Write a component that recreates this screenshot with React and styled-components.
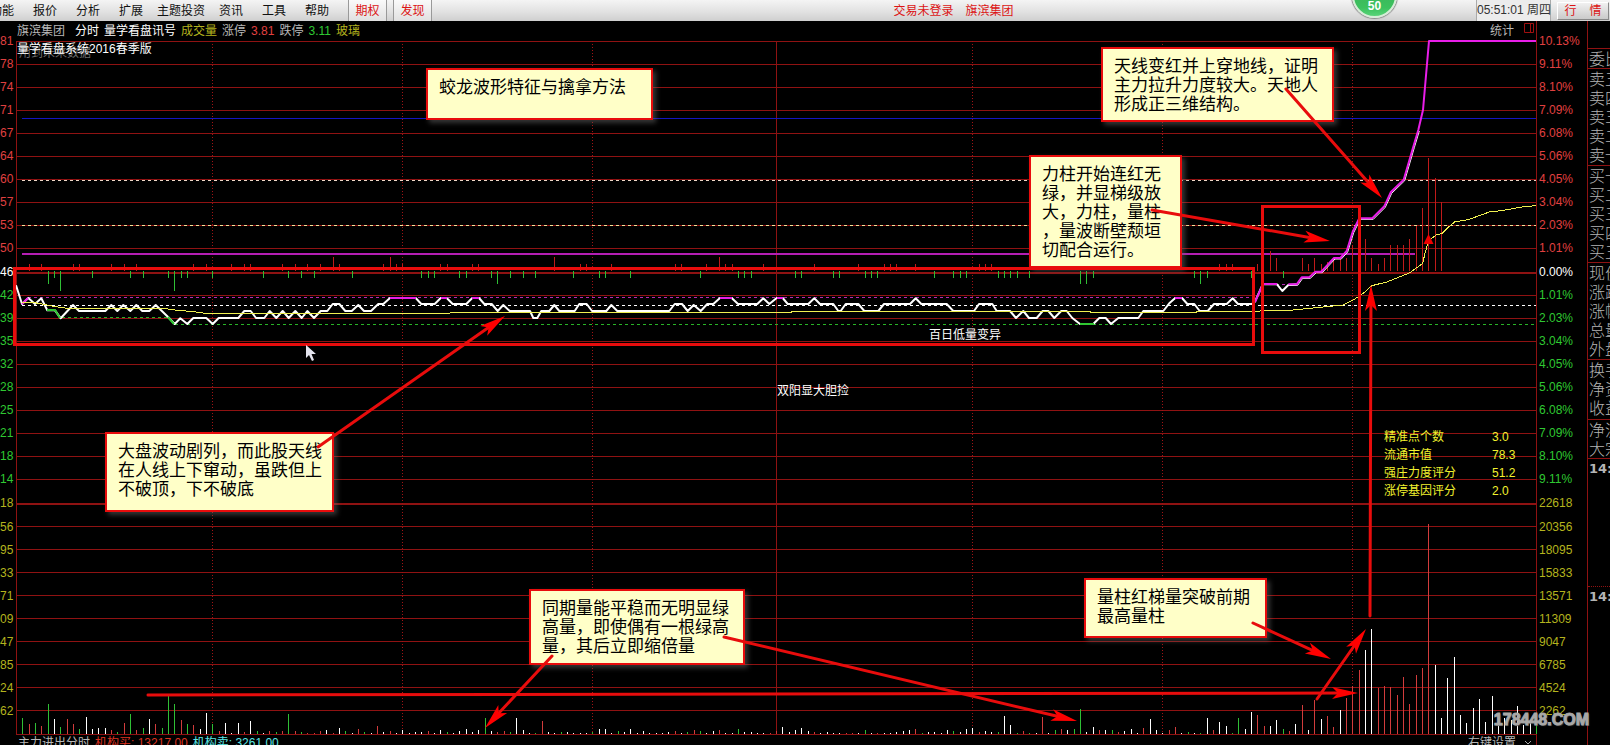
import React from "react";
import styled, { createGlobalStyle, css } from "styled-components";

const CJK = `"Liberation Sans", "Noto Sans CJK SC", sans-serif`;

const C = {
  red: "#e04040",
  green: "#2fc832",
  olive: "#b4b41e",
  yellow: "#f2f22e",
  white: "#ffffff",
  grey: "#b8b8b8",
  grid: "#8f1212",
  mark: "#e80c0c",
  magenta: "#e81ee8",
};

const Global = createGlobalStyle`
  *, *::before, *::after { box-sizing: border-box; }
  body { margin: 0; background: #000; font: 12px/16px ${CJK}; }
  ul, ol, p, h1 { margin: 0; padding: 0; list-style: none; font-size: inherit; font-weight: inherit; }
  button { font: inherit; margin: 0; padding: 0; border: 0; background: none; cursor: pointer; }
`;

const Page = styled.div`
  display: flex;
  flex-direction: column;
  min-width: 1200px;
  height: 100vh;
  overflow: hidden;
  background: #000;
  color: ${C.white};
`;

/* ---------- menu bar ---------- */

const MenuBar = styled.header`
  position: relative;
  display: flex;
  flex: none;
  height: 21px;
  overflow: hidden;
  background: linear-gradient(#f4f4f4, #e2e2e2 55%, #cfcfcf);
  color: #111;
`;

const Menu = styled.nav`
  display: flex;
  flex: 3;
  align-items: stretch;
  gap: 19px;
  margin: 0 10px 0 -10px;
`;

const MenuItem = styled.button`
  margin: 0 ${(p) => (p.$wide ? -5 : 0)}px;
  white-space: nowrap;
  color: #111;
`;

const TabGroup = styled.div`
  display: flex;
  gap: 6px;
`;

const TabButton = styled.button`
  width: 39px;
  border-left: 1px solid #999;
  border-right: 1px solid #999;
  background: linear-gradient(#fafafa, #e0e0e0);
  color: #dc1414;
`;

const Account = styled.div`
  display: flex;
  align-items: center;
  gap: 12px;
  color: #dc1414;
  white-space: nowrap;
`;

const StatusArea = styled.div`
  display: flex;
  flex: 2;
  justify-content: flex-end;
  align-items: stretch;
  gap: 6px;
  padding-right: 1px;
`;

const Clock = styled.time`
  width: 75px;
  border: 1px solid #aaa;
  border-width: 0 1px;
  background: #ececec;
  color: #333;
  line-height: 20px;
  text-align: center;
  white-space: nowrap;
`;

const QuoteButton = styled.button`
  display: flex;
  width: 52px;
  height: 18px;
  margin-top: 2px;
  align-items: center;
  justify-content: space-around;
  border: 1px solid #888;
  border-color: #fff #888 #888 #fff;
  background: linear-gradient(#f0f0f0, #cacaca);
  color: #dc1414;
`;

const Badge = styled.span`
  position: absolute;
  right: 213px;
  bottom: 3px;
  display: flex;
  width: 45px;
  height: 45px;
  align-items: flex-end;
  justify-content: center;
  padding-bottom: 2px;
  border: 2px solid #d8ecd8;
  border-radius: 50%;
  box-shadow: 0 0 1px 1px #8a8a8a;
  background: linear-gradient(#3aa856, #3cc25e 80%, #58d478);
  color: #fff;
  font-weight: 700;
`;

/* ---------- main layout ---------- */

const Body = styled.main`
  display: grid;
  flex: 1;
  grid-template-columns: 16px minmax(0, 1fr) 51px 23px;
  min-height: 0;
  overflow: hidden;
`;

const Axis = styled.ol`
  padding-top: 9px;
  ${(p) =>
    p.$side === "left"
      ? css`
          padding-right: 3px;
          text-align: right;
        `
      : css`
          padding-left: 2px;
          border-left: 1px solid ${C.grid};
        `}
`;

const AxisLabel = styled.li`
  height: ${(p) => p.$height || 23}px;
  color: ${(p) => p.$color};
  line-height: ${(p) => p.$height || 23}px;
`;

const ChartColumn = styled.section`
  display: flex;
  flex-direction: column;
  min-width: 0;
`;

const InfoBar = styled.div`
  display: flex;
  height: 20px;
  align-items: center;
  gap: 5px;
  padding-left: 1px;
  white-space: nowrap;
`;

const Info = styled.span`
  color: ${(p) => p.$color};
  margin-right: ${(p) => (p.$wide ? 5 : 0)}px;
`;

const InfoTools = styled.div`
  display: flex;
  margin-left: auto;
  align-items: flex-start;
  gap: 10px;
  padding-right: 2px;
`;

const PlainButton = styled.button`
  color: ${(p) => p.$color || C.grey};
`;

const Plot = styled.div`
  position: relative;
  flex: none;
`;

const Canvas = styled.svg`
  display: block;
  width: 100%;
  height: 693px;
  overflow: visible;
`;

const MarkLayer = styled(Canvas)`
  position: absolute;
  inset: 0;
  pointer-events: none;
`;

const Title = styled.h1`
  position: absolute;
  top: 0;
  left: 1px;
  white-space: nowrap;
`;

const Faint = styled.p`
  position: absolute;
  top: 4px;
  left: 3px;
  color: #6a6a6a;
  white-space: nowrap;
`;

const at = css`
  position: absolute;
  left: ${(p) => `calc(100% * ${p.$x} / 1520)`};
  top: ${(p) => p.$y}px;
`;

const PlotLabel = styled.span`
  ${at}
  white-space: nowrap;
`;

const Note = styled.aside`
  ${at}
  width: ${(p) => p.$w}px;
  height: ${(p) => p.$h}px;
  padding: 6px 0 0 11px;
  border: 2px solid ${C.mark};
  background: #ffffc8;
  box-shadow: 3px 3px 5px rgba(110, 110, 110, 0.5);
  color: #000;
  font: 17px/19px "Noto Sans CJK SC", sans-serif;
  white-space: nowrap;
`;

const Stats = styled.table`
  ${at}
  border-collapse: collapse;
  color: ${C.yellow};
  th, td {
    height: 18px;
    padding: 0;
    font-weight: 400;
    text-align: left;
    white-space: nowrap;
  }
  th { width: 108px; }
`;

const Footer = styled.footer`
  display: flex;
  gap: 5px;
  padding: 1px 4px 0 2px;
  white-space: nowrap;
`;

const FooterTools = styled.div`
  display: flex;
  margin-left: auto;
  align-items: center;
  gap: 8px;
`;

const Watermark = styled.span`
  position: absolute;
  top: 667px;
  right: -53px;
  color: #a8a8a8;
  font: 700 16px/24px "Liberation Sans", sans-serif;
  -webkit-text-stroke: 1px #a8a8a8;
  text-shadow: 1px 1px 1px #444;
`;

/* ---------- quote panel ---------- */

const QuotePanel = styled.aside`
  padding-top: 27px;
  border-left: 1px solid ${C.grid};
  overflow: hidden;
  color: #b4b4b4;
  font: 300 16px/19px "Noto Sans CJK SC", sans-serif;
`;

const QuoteGroup = styled.ul`
  height: ${(p) => p.$height}px;
  padding-left: 1px;
  border-top: 1px ${(p) => (p.$dotted ? "dotted" : "solid")} ${C.grid};
  overflow: hidden;
  white-space: nowrap;
`;

const TimeStamp = styled.li`
  font: 700 13px/19px "DejaVu Sans", sans-serif;
`;

/* ---------- data ---------- */

const LEFT_PRICE = "81 78 74 71 67 64 60 57 53 50 46 42 39 35 32 28 25 21 18 14".split(" ");
const LEFT_VOLUME = "18 56 95 33 71 09 47 85 24 62".split(" ");
const PERCENT =
  "10.13 9.11 8.10 7.09 6.08 5.06 4.05 3.04 2.03 1.01 0.00 1.01 2.03 3.04 4.05 5.06 6.08 7.09 8.10 9.11"
    .split(" ")
    .map((v) => v + "%");
const VOLUME_SCALE = "22618 20356 18095 15833 13571 11309 9047 6785 4524 2262".split(" ");

const VOLUME = `
g16 r10 g11 r8 g30 w15 g7 r15 r10 g5 w17 w5 w6 w6 r4 g2 r11 g20 r4 g6
w15 r10 g6 g38 g30 r14 g10 r9 w5 w21 g10 r3 w11 w1 w11 r2 w13 g3 w1 r3
g2 r3 g20 r3 g2 r1 r1 r3 w4 r1 w6 g3 w1 r5 g2 w1 r8 w2 r3 w1 w4 w1 w2
w2 r3 w1 w4 g2 w1 w3 w5 w2 w4 g16 w3 r2
r3 g2 w16 w4 w1 g1 r13 w2 w1 g2 w2 w1 w1 w1 g2 w5 w5 w1 g3 w2
w5 w1 w3 w1 w1 w1 w2 r3 w1 g2 r4 g3 w1 w3 r4 w1 w1 g5 w2 w2
w1 w1 r1 r3 w7 w2 w4 w6 w3 r2 w1 w2 w1 w1 r1 r1 w1 g4 w1 r1 w1 w1 w2 w3 w4 r5
g1 w2 w2 w1 w4 g3 w2 w5 w6 r2 w3 w2 g2 w18 w9 g1 r3 g1 w1 r17
w1 g4 r5 w4 g5 g25 w2 w7 r4 w4 g4 r2 w3 w5 w1 r6 w15 w4 w1 r4
r7 w1 g2 w1 g1 w16 r4 w12 w8 g1 g16 w5 w22 r19 r8 w8 w14 g5 r3 w10
r29 w4 r34 w15 r18 r7 w24 r36 r48 r64 w84 w105 r46 r48 r47 r39 r57 r30 r59 r66
r210 w69 w16 w56 w77 w19 w11 w26 w35 w12 w38 w10 w16 w14 w28 w9 w14 g15`
  .trim()
  .split(/\s+/);

const FORCE_UP = {
  7: [2, 4, 9, 10, 15, 17, 19, 28, 30, 34, 36, 37, 42, 44, 46, 48, 51, 58, 60, 61, 67, 68, 72, 73, 89, 90, 94, 104, 105, 109, 112, 113, 118, 126, 133, 137, 138, 139, 142, 152, 153, 154, 190, 191, 192, 196, 204, 206, 215],
  9: [207],
  13: [199, 203, 205, 208, 209, 210, 214, 216],
  14: [50, 59, 85, 111],
  20: [198],
  26: [211, 217, 218, 219],
  32: [213, 220],
  45: [221],
  63: [222],
  69: [225],
  93: [224],
  113: [223],
};
const FORCE_DOWN = {
  7: [6, 12, 18, 20, 24, 26, 27, 31, 39, 43, 45, 47, 53, 64, 65, 66, 70, 71, 75, 78, 80, 82, 88, 92, 93, 97, 108, 114, 115, 116, 123, 124, 129, 130, 134, 135, 136, 145, 148, 149, 150, 155, 156, 157, 158, 160, 170, 186, 188, 195, 200],
  13: [5, 76, 168, 169, 187],
  20: [7, 25],
};

/* Traces are kept on a grid three times finer than the plot. */
const trace = (dx, dy, list) =>
  list
    .trim()
    .split(/\s+/)
    .map((pair) => {
      const [x, y] = pair.split(",").map(Number);
      return `${((x + dx) / 3).toFixed(1)},${((y + dy) / 3).toFixed(1)}`;
    })
    .join(" ");

const PRICE = [
  trace(0, 720, `48,136 66,192 85,174 105,192 124,175 142,211 165,211 182,235 219,195 237,213 316,213 334,195 352,213
    370,195 391,213 409,195 427,213 448,213 467,195 505,232 524,252 541,235 562,252 580,234 619,234 638,252 656,234
    715,234 733,213 752,213 768,234 793,234 809,213 829,234 848,213 866,234 886,213 905,234 922,213 942,234 962,213
    982,213 998,192 1018,192 1036,213 1055,213 1075,195 1092,213 1113,213 1135,192 1150,192 1170,174 1247,174`),
  trace(1200, 720, `64,192 104,192 122,174 140,174 158,192 199,192 217,174 237,174 253,192 275,192 293,213 310,195
    329,213 390,213 400,234 412,234 424,213 448,213 463,195 478,213 524,213 538,192 560,192 576,213 619,213 634,195
    652,213 808,213 824,192 846,192 863,213 881,195 902,213 922,192 940,192 960,174 995,174 1014,192 1072,192 1090,175
    1108,192 1130,174 1148,174 1163,192 1225,192 1243,175 1260,192`),
  trace(2460, 720, `40,192 55,213 62,213 77,192 115,192 133,213 175,213 192,192 270,192 287,175 304,192 380,192
    400,213 462,213 477,192 517,192 530,213 570,213 588,234 610,213 627,234 650,234 668,213 685,213 703,234 724,213
    740,213 757,234 780,252 820,252 838,234 857,234 873,252 895,234 955,234 970,213 1030,213 1048,190 1066,174
    1086,174 1102,192 1123,192 1139,213 1163,213 1182,192 1220,192 1238,175 1254,192 1295,192`),
  trace(3600, 390, "165,515 188,463 231,463 247,483 265,465 290,463"),
].join(" ");

const CLIMB = trace(3600, 390, `265,463 290,463 305,442 328,442 346,425 364,425 402,384 421,384 440,363 458,305
  478,265 517,265 553,229 572,187 611,149 640,50 655,0`);
const RALLY = `${CLIMB} 1423,110 1429,41 1536,41`;

const AVERAGE = [
  trace(0, 720, "66,188 105,188 155,198 200,205 490,205 525,210 580,215 610,219 1350,219 1351,217 2375,217 2376,214 3270,214 3271,217 3590,217 3591,214 3750,214"),
  trace(3600, 390, `180,543 270,541 330,535 430,525 460,510 490,490 515,467 560,456 630,428 668,400 675,370 685,335
    695,325 710,314 725,311 745,292 765,275 805,269 870,245 905,242 970,230 1008,227`),
].join(" ");

const PEAKS = [
  "22,304 28,298", "390,298 416,298", "441,298 447,298", "472,298 479,298", "720,298 732,298", "777,298 783,298",
  "1175,298 1182,298", "1255,302 1263,284 1277,284",
];
const TROUGHS = ["47,310 55,310 60,318", "168,317 174,324", "1080,324 1094,324"];

const GRID_Y = [41, 64, 87, 110, 133, 156, 179, 202, 225, 248, 295, 318, 341, 364, 387, 410, 433, 456, 479, 526, 549, 572, 595, 618, 641, 664, 687, 710, 734];
const DOTTED_X = [212, 402, 592, 972, 1162, 1352];

const ARROWS = [
  [1286, 89, 1382, 198],
  [1152, 210, 1330, 241],
  [318, 447, 505, 316],
  [552, 656, 485, 728],
  [724, 637, 1077, 721],
  [1253, 623, 1331, 659],
  [1317, 699, 1366, 629],
  [148, 695, 1358, 693],
  [1370, 616, 1371, 285],
];

const NOTES = [
  { x: 410, y: 27, w: 227, h: 52, lines: ["蛟龙波形特征与擒拿方法"] },
  { x: 1085, y: 6, w: 233, h: 75, lines: ["天线变红并上穿地线，证明", "主力拉升力度较大。天地人", "形成正三维结构。"] },
  { x: 1013, y: 114, w: 153, h: 113, lines: ["力柱开始连红无", "绿，并显梯级放", "大，力柱，量柱", "，量波断壁颓垣", "切配合运行。"] },
  { x: 89, y: 391, w: 229, h: 80, lines: ["大盘波动剧列，而此股天线", "在人线上下窜动，虽跌但上", "不破顶，下不破底"] },
  { x: 513, y: 548, w: 216, h: 76, lines: ["同期量能平稳而无明显绿", "高量，即使偶有一根绿高", "量，其后立即缩倍量"] },
  { x: 1068, y: 537, w: 183, h: 60, lines: ["量柱红梯量突破前期", "最高量柱"] },
];

const STATS = [
  ["精准点个数", "3.0"],
  ["流通市值", "78.3"],
  ["强庄力度评分", "51.2"],
  ["涨停基因评分", "2.0"],
];

const QUOTES = [
  { height: 20, rows: ["委比"] },
  { height: 97, rows: ["卖五", "卖四", "卖三", "卖二", "卖一"] },
  { height: 97, rows: ["买一", "买二", "买三", "买四", "买五"] },
  { height: 97, rows: ["现价", "涨跌", "涨幅", "总量", "外盘"] },
  { height: 60, rows: ["换手", "净资", "收益"] },
  { height: 39, rows: ["净流", "大宗"] },
];

/* ---------- drawing parts ---------- */

const slotX = (i) => Math.round(16 + (i * 1520) / 240);
const BAR = { g: "#2fbf35", r: "#d23c3c", w: "#ffffff" };
const VIEW = { viewBox: "16 41 1520 693", preserveAspectRatio: "none", "aria-hidden": true };

function ForceBars({ data, up }) {
  return Object.entries(data).flatMap(([h, slots]) =>
    slots.map((i) => (
      <rect key={`${h}-${i}`} x={slotX(i)} y={up ? 271 - h : 271} width="1" height={h} fill={up ? "#c01a1a" : BAR.g} />
    ))
  );
}

function ChartDrawing() {
  return (
    <Canvas {...VIEW}>
      <g shapeRendering="crispEdges" fill={C.grid}>
        {GRID_Y.map((y) => (
          <rect key={y} x="16" y={y} width="1520" height="1" />
        ))}
        <rect x="16" y="272" width="1520" height="2" />
        <rect x="16" y="503" width="1520" height="2" />
        <rect x="16" y="41" width="1" height="693" />
        <rect x="776" y="41" width="1" height="693" />
      </g>
      <g shapeRendering="crispEdges" fill="none">
        {DOTTED_X.map((x) => (
          <path key={x} d={`M${x + 0.5} 41V734`} stroke="#a01414" strokeDasharray="1 2" />
        ))}
        <path d="M22 118.500H1536" stroke="#1414c0" />
        <path d="M22 180.500H1536" stroke="#f0d8c8" strokeDasharray="3 3" />
        <path d="M22 225.500H1536" stroke="#f4e49a" strokeDasharray="3 3" />
        <path d="M22 254H1415" stroke="#b41eb4" strokeWidth="2" />
        <path d="M28 297.500H1254" stroke="#b428b4" strokeDasharray="3 3" />
        <path d="M22 305.500H1536" stroke="#fff" strokeDasharray="3 3" />
        <path d="M62 317.500H168M175 324.500H1536" stroke="#28b428" strokeDasharray="3 3" />
        <path d="M1264 284.500H1290" stroke="#b428b4" strokeDasharray="3 3" />
      </g>
      <g shapeRendering="crispEdges">
        <ForceBars data={FORCE_UP} up />
        <ForceBars data={FORCE_DOWN} />
        {VOLUME.map((v, i) => {
          const h = Number(v.slice(1));
          return <rect key={i} x={slotX(i + 1)} y={734 - h} width="1" height={h} fill={BAR[v[0]]} />;
        })}
      </g>
      <g fill="none" strokeLinejoin="round">
        <polyline points={PRICE} stroke="#fff" strokeWidth="2" />
        <polyline points={CLIMB} stroke="#fff" strokeWidth="1" transform="translate(1 1)" />
        <polyline points={RALLY} stroke={C.magenta} strokeWidth="2" />
        {PEAKS.map((p) => (
          <polyline key={p} points={p} stroke={C.magenta} strokeWidth="2" />
        ))}
        {TROUGHS.map((p) => (
          <polyline key={p} points={p} stroke={C.green} strokeWidth="2" />
        ))}
        <polyline points={AVERAGE} stroke="#f0f050" strokeWidth="1" shapeRendering="crispEdges" />
      </g>
      <path d="M1428.500 234l5 10h-10z" fill="#f00000" />
    </Canvas>
  );
}

function Arrow({ from: [x1, y1, x2, y2] }) {
  const length = Math.hypot(x2 - x1, y2 - y1);
  const angle = (Math.atan2(y2 - y1, x2 - x1) * 180) / Math.PI;
  return (
    <g transform={`translate(${x1} ${y1}) rotate(${angle})`}>
      <path d={`M0 0H${length - 18}`} stroke={C.mark} strokeWidth="3" strokeLinecap="round" />
      <path d={`M${length} 0l-26 -6l6 6l-6 6z`} fill="#ff0000" />
    </g>
  );
}

function MarkDrawing() {
  return (
    <MarkLayer {...VIEW}>
      <g fill="none" stroke={C.mark} strokeWidth="3">
        <rect x="14.500" y="268.500" width="1239" height="76" />
        <rect x="1262.500" y="206.500" width="97" height="146" />
      </g>
      {ARROWS.map((a) => (
        <Arrow key={a.join()} from={a} />
      ))}
      <path d="M306 345v13l3-3l3 6l2-1l-2.500-6h4.500z" fill="#e4e4ee" />
    </MarkLayer>
  );
}

function ScaleAxis({ side, prices, volumes }) {
  const color = (i) => (i < 10 ? C.red : i === 10 ? C.white : C.green);
  return (
    <Axis $side={side}>
      {prices.map((v, i) => (
        <AxisLabel key={i} $color={color(i)} $height={i === 10 ? 24 : 23}>
          {v}
        </AxisLabel>
      ))}
      {volumes.map((v, i) => (
        <AxisLabel key={v} $color={C.olive} $height={i === 0 ? 25 : 23}>
          {v}
        </AxisLabel>
      ))}
    </Axis>
  );
}

export default function App() {
  return (
    <Page>
      <Global />
      <MenuBar>
        <Menu>
          {["功能", "报价", "分析", "扩展", "主题投资", "资讯", "工具", "帮助"].map((t) => (
            <MenuItem key={t} $wide={t.length > 2}>
              {t}
            </MenuItem>
          ))}
          <TabGroup>
            <TabButton>期权</TabButton>
            <TabButton>发现</TabButton>
          </TabGroup>
        </Menu>
        <Account>
          <span>交易未登录</span>
          <span>旗滨集团</span>
        </Account>
        <StatusArea>
          <Clock>05:51:01 周四</Clock>
          <QuoteButton>
            <span>行</span>
            <span>情</span>
          </QuoteButton>
        </StatusArea>
        <Badge>50</Badge>
      </MenuBar>

      <Body>
        <ScaleAxis side="left" prices={LEFT_PRICE} volumes={LEFT_VOLUME} />
        <ChartColumn>
          <InfoBar>
            <Info $color={C.grey} $wide>旗滨集团</Info>
            <Info $color={C.white}>分时</Info>
            <Info $color={C.white}>量学看盘讯号</Info>
            <Info $color={C.olive}>成交量</Info>
            <Info $color={C.grey}>涨停</Info>
            <Info $color={C.red}>3.81</Info>
            <Info $color={C.grey}>跌停</Info>
            <Info $color={C.green}>3.11</Info>
            <Info $color={C.olive}>玻璃</Info>
            <InfoTools>
              <PlainButton>统计</PlainButton>
              <svg width="10" height="11" viewBox="0 0 10 11" fill="none" stroke="#a01010" aria-hidden="true">
                <path d="M.5.5h9v9h-9zM6.500.5v9" />
              </svg>
            </InfoTools>
          </InfoBar>
          <Plot>
            <ChartDrawing />
            <Faint>用到未来数据</Faint>
            <Title>量学看盘系统2016春季版</Title>
            <PlotLabel $x={913} $y={286}>百日低量变异</PlotLabel>
            <PlotLabel $x={761} $y={342}>双阳显大胆捡</PlotLabel>
            <Stats $x={1368} $y={387}>
              <tbody>
                {STATS.map(([name, value]) => (
                  <tr key={name}>
                    <th scope="row">{name}</th>
                    <td>{value}</td>
                  </tr>
                ))}
              </tbody>
            </Stats>
            {NOTES.map((n) => (
              <Note key={n.x} $x={n.x} $y={n.y} $w={n.w} $h={n.h}>
                {n.lines.map((line) => (
                  <p key={line}>{line}</p>
                ))}
              </Note>
            ))}
            <MarkDrawing />
            <Watermark>178448.COM</Watermark>
          </Plot>
          <Footer>
            <Info $color={C.grey}>主力进出分时</Info>
            <Info $color="#dc3220">机构买: 13217.00</Info>
            <Info $color="#5ae6e6">机构卖: 3261.00</Info>
            <FooterTools>
              <PlainButton>右键设置</PlainButton>
              <svg width="8" height="6" viewBox="0 0 8 6" fill="none" stroke="#aaa" aria-hidden="true">
                <path d="M1 1l3 3l3-3" />
              </svg>
            </FooterTools>
          </Footer>
        </ChartColumn>
        <ScaleAxis side="right" prices={PERCENT} volumes={VOLUME_SCALE} />
        <QuotePanel>
          {QUOTES.map((g) => (
            <QuoteGroup key={g.rows[0]} $height={g.height}>
              {g.rows.map((r) => (
                <li key={r}>{r}</li>
              ))}
            </QuoteGroup>
          ))}
          <QuoteGroup $height={128}>
            <TimeStamp>14:</TimeStamp>
          </QuoteGroup>
          <QuoteGroup $height={128} $dotted>
            <TimeStamp>14:</TimeStamp>
          </QuoteGroup>
        </QuotePanel>
      </Body>
    </Page>
  );
}
